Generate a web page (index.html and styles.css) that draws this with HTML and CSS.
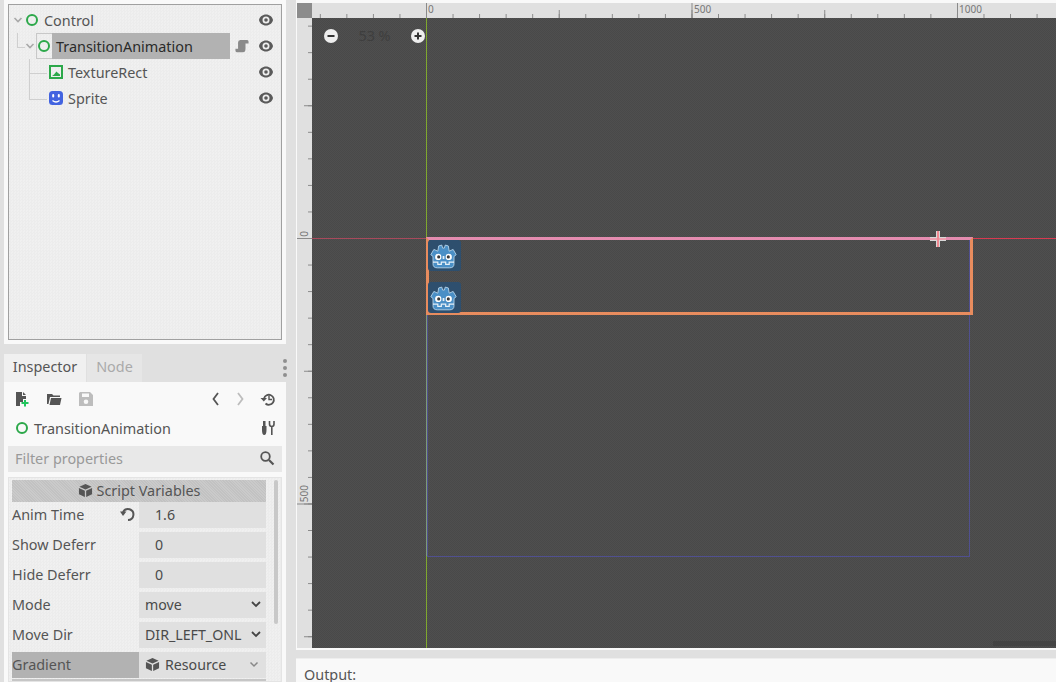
FILE: index.html
```html
<!DOCTYPE html>
<html lang="en">
<head>
<meta charset="UTF-8" />
<title>Godot editor</title>
<link rel="stylesheet" href="styles.css">
</head>
<body>
<svg class="defs" xmlns="http://www.w3.org/2000/svg">
  <symbol id="eye" viewBox="0 0 16 16">
    <path fill="#5a5a5a" fill-rule="evenodd" d="M8 2.500C4.500 2.500 1.700 4.800 1 8c.7 3.200 3.500 5.500 7 5.500s6.300-2.300 7-5.500c-.7-3.200-3.500-5.500-7-5.500zm0 2a3.500 3.500 0 1 1 0 7 3.500 3.500 0 0 1 0-7z"/>
    <circle fill="#5a5a5a" cx="8" cy="8" r="1.800"/>
  </symbol>
  <symbol id="box" viewBox="0 0 16 16">
    <path fill="#555" d="M8 1 14.500 4 8 7 1.500 4z"/>
    <path fill="#555" d="M1 5.300 7.300 8.200V15L1 12z"/>
    <path fill="#555" d="M15 5.300 8.700 8.200V15L15 12z"/>
  </symbol>
  <symbol id="godot" viewBox="0 0 32 32">
    <path fill="#4a8fc6" stroke="#b8d6ec" stroke-width="1" d="M1.500 14.500 5 8.500 9.500 10.500 10.500 4.500 14 3.500 15 7H17L18 3.500 21.500 4.500 22.500 10.500 27 8.500 30.500 14.500 28 16.500V25Q28 29.500 23 29.500H9Q4 29.500 4 25V16.500z"/>
    <path fill="none" stroke="#e6f0f7" stroke-width="1.400" d="M4 23H9.500V25.500H13.500V23H18.500V25.500H22.500V23H28"/>
    <circle fill="#fff" cx="10" cy="17" r="3.600"/>
    <circle fill="#fff" cx="22" cy="17" r="3.600"/>
    <circle fill="#3a3a3a" cx="10.500" cy="17" r="1.800"/>
    <circle fill="#3a3a3a" cx="21.500" cy="17" r="1.800"/>
    <rect fill="#e6f0f7" x="15" y="16" width="2" height="3.500"/>
  </symbol>
</svg>

<div class="app">
  <div class="left">
    <div class="scene-panel">
      <div class="tree">
        <span class="tree-line line-a"></span>
        <span class="tree-line line-b"></span>
        <span class="tree-line line-c"></span>
        <span class="tree-line line-d"></span>
        <span class="tree-line line-e"></span>

        <div class="row depth-0">
          <svg class="chevron" viewBox="0 0 10 10"><path d="M1.500 3 5 6.500 8.500 3" fill="none" stroke="#a8a8a8" stroke-width="1.600"/></svg>
          <span class="ring"></span>
          <span class="row-label">Control</span>
          <svg class="eye"><use href="#eye"/></svg>
        </div>
        <div class="row depth-1">
          <svg class="chevron" viewBox="0 0 10 10"><path d="M1.500 3 5 6.500 8.500 3" fill="none" stroke="#a8a8a8" stroke-width="1.600"/></svg>
          <span class="cursor-cell"><span class="ring"></span></span>
          <span class="row-label selected">TransitionAnimation</span>
          <svg class="script-icon" viewBox="0 0 16 16"><path fill="#8a8a8a" d="M6 1H14Q15.500 1 15.500 3.500V5H12V11Q12 15 9 15H2Q.5 15 .5 13V11H3.500V4Q3.500 1 6 1z"/></svg>
          <svg class="eye"><use href="#eye"/></svg>
        </div>
        <div class="row depth-2">
          <svg class="node-icon" viewBox="0 0 14 14"><rect x="1" y="1" width="12" height="12" fill="none" stroke="#2ca84a" stroke-width="2"/><path fill="#2ca84a" d="M3 11 5 9.500 7.500 6.500 9 8 11 9.500V11z"/></svg>
          <span class="row-label">TextureRect</span>
          <svg class="eye"><use href="#eye"/></svg>
        </div>
        <div class="row depth-2">
          <svg class="node-icon" viewBox="0 0 14 14"><rect width="14" height="14" rx="3.500" fill="#4263e0"/><rect x="3.200" y="3" width="2" height="3.500" rx="1" fill="#fff"/><rect x="8.800" y="3" width="2" height="3.500" rx="1" fill="#fff"/><path d="M3.500 9.500Q7 12.500 10.500 9.500" fill="none" stroke="#fff" stroke-width="1.300"/></svg>
          <span class="row-label">Sprite</span>
          <svg class="eye"><use href="#eye"/></svg>
        </div>
      </div>
    </div>

    <div class="tabs">
      <span class="tab active">Inspector</span>
      <span class="tab">Node</span>
      <span class="dots"><i></i><i></i><i></i></span>
    </div>

    <div class="inspector">
      <div class="toolbar">
        <svg class="tool" viewBox="0 0 16 16"><path fill="#555" d="M2 1H8V5H12V8H9V11H6V15H2z"/><path fill="#555" d="M9 1 12 4H9z"/><path fill="#22c55e" d="M10 9H12V11H14.500V13H12V15.500H10V13H7.500V11H10z"/></svg>
        <svg class="tool gap-a" viewBox="0 0 16 16"><path fill="#555" d="M1 3H6L7.500 4.500H14V6H4L2.500 13H1z"/><path fill="#555" d="M5 7H15.500L14 14H3.500z"/></svg>
        <svg class="tool gap-a" viewBox="0 0 16 16"><path fill="#bdbdbd" fill-rule="evenodd" d="M2 1H12L15 4V15H1V2zM4 2.500V6H11V2.500zM8 8.500A2.300 2.300 0 1 0 8 13.100 2.300 2.300 0 0 0 8 8.500z"/></svg>
        <span class="spacer"></span>
        <svg class="tool" viewBox="0 0 16 16"><path fill="none" stroke="#555" stroke-width="1.800" d="M10 2 5.500 8 10 14"/></svg>
        <svg class="tool gap-b" viewBox="0 0 16 16"><path fill="none" stroke="#bdbdbd" stroke-width="1.800" d="M6 2 10.500 8 6 14"/></svg>
        <svg class="tool gap-c" viewBox="0 0 16 16"><path fill="none" stroke="#555" stroke-width="1.800" d="M4 7.500A5 5 0 1 1 5.500 12.500"/><path fill="#555" d="M.5 7H7L3.800 10.500z"/><path fill="none" stroke="#555" stroke-width="1.400" d="M9 5V8.500H12"/></svg>
      </div>
      <div class="object-row">
        <span class="ring"></span>
        <span class="object-name">TransitionAnimation</span>
        <svg class="tool" viewBox="0 0 16 16"><path fill="#555" d="M3 1H5.500V6H6.500V10Q6.500 15 4.200 15 2 15 2 10V6H3z"/><path fill="none" stroke="#555" stroke-width="1.600" d="M9.500 1V4Q9.500 6.500 11.800 6.500 14 6.500 14 4V1M11.800 6.500V15"/></svg>
      </div>
      <div class="filter">
        <span>Filter properties</span>
        <svg class="tool" viewBox="0 0 16 16"><circle cx="6.500" cy="6.500" r="4.300" fill="none" stroke="#555" stroke-width="1.800"/><path d="M10 10 14.500 14.500" stroke="#555" stroke-width="2.200"/></svg>
      </div>
      <div class="props">
        <span class="scrollbar"></span>
        <div class="section"><svg class="box"><use href="#box"/></svg>Script Variables</div>
        <div class="prop">
          <span class="prop-label">Anim Time<svg class="revert" viewBox="0 0 16 16"><path fill="none" stroke="#555" stroke-width="2" d="M3 6A5.500 5.500 0 1 1 8 14"/><path fill="#555" d="M0 5.500H6.500L3 10z"/></svg></span>
          <span class="prop-value num">1.6</span>
        </div>
        <div class="prop">
          <span class="prop-label">Show Deferr</span>
          <span class="prop-value num">0</span>
        </div>
        <div class="prop">
          <span class="prop-label">Hide Deferr</span>
          <span class="prop-value num">0</span>
        </div>
        <div class="prop">
          <span class="prop-label">Mode</span>
          <span class="prop-value">move<svg class="drop" viewBox="0 0 10 10"><path d="M1 3 5 7 9 3" fill="none" stroke="#444" stroke-width="1.800"/></svg></span>
        </div>
        <div class="prop">
          <span class="prop-label">Move Dir</span>
          <span class="prop-value">DIR_LEFT_ONL<svg class="drop" viewBox="0 0 10 10"><path d="M1 3 5 7 9 3" fill="none" stroke="#444" stroke-width="1.800"/></svg></span>
        </div>
        <div class="prop">
          <span class="prop-label picked">Gradient</span>
          <span class="prop-value"><svg class="box"><use href="#box"/></svg>Resource<svg class="drop faint" viewBox="0 0 10 10"><path d="M1.500 3.500 5 7 8.500 3.500" fill="none" stroke="#888" stroke-width="1.500"/></svg></span>
        </div>
        <div class="section-stub"></div>
      </div>
    </div>
  </div>

  <div class="right">
    <div class="editor">
      <div class="corner"></div>
      <div class="ruler-top">
        <span class="mark mark-0">0</span>
        <span class="mark mark-500">500</span>
        <span class="mark mark-1000">1000</span>
      </div>
      <div class="ruler-left">
        <span class="vmark vmark-0">0</span>
        <span class="vmark vmark-500">500</span>
      </div>
      <div class="canvas">
        <div class="zoom-bar">
          <span class="zoom-btn"><svg viewBox="0 0 10 10"><path d="M1.500 5H8.500" stroke="#333" stroke-width="2"/></svg></span>
          <span class="zoom-value">53 %</span>
          <span class="zoom-btn"><svg viewBox="0 0 10 10"><path d="M1.500 5H8.500M5 1.500V8.500" stroke="#333" stroke-width="2"/></svg></span>
        </div>
        <span class="guide-v"></span>
        <span class="guide-h"></span>
        <span class="frame-blue"></span>
        <div class="frame-orange">
          <span class="tile"><svg><use href="#godot"/></svg></span>
          <span class="tile"><svg><use href="#godot"/></svg></span>
        </div>
        <span class="handle"></span>
        <span class="canvas-scroll"></span>
      </div>
    </div>
    <div class="output">Output:</div>
  </div>
</div>
</body>
</html>
```

FILE: styles.css
```css
* {
  box-sizing: border-box;
}
html, body {
  margin: 0;
  height: 100%;
  overflow: hidden;
}
body {
  background: #e0e0e0;
  color: #555;
  font-family: "Noto Sans", sans-serif;
  font-size: 14.4px;
}
.defs {
  display: none;
}
.app {
  display: flex;
  height: 682px;
}

/* left dock */
.left {
  width: 287px;
  padding-left: 4px;
  flex: none;
  display: flex;
  flex-direction: column;
}
.scene-panel {
  width: 282px;
  height: 344px;
  flex: none;
  padding: 4px;
  background: #f9f9f9;
}
.tree {
  position: relative;
  height: 336px;
  padding-top: 2px;
  border: 1px solid #a0a0a0;
  background: #eeeeee;
  background-image: repeating-conic-gradient(#ececec 0 25%, #f0f0f0 0 50%);
  background-size: 3px 3px;
}
.row {
  display: flex;
  align-items: center;
  height: 26px;
  padding-right: 7px;
}
.depth-0 {
  padding-left: 4px;
}
.depth-1 {
  padding-left: 16px;
}
.depth-2 {
  padding-left: 40px;
}
.chevron {
  width: 10px;
  height: 10px;
  margin-right: 3px;
}
.depth-1 .chevron {
  margin-right: 1px;
}
.ring {
  width: 12px;
  height: 12px;
  flex: none;
  border: 2px solid #2ca84a;
  border-radius: 50%;
}
.row-label {
  flex: 1;
  margin-left: 6px;
}
.cursor-cell {
  display: flex;
  align-items: center;
  justify-content: center;
  width: 16px;
  height: 26px;
  flex: none;
  padding-right: 1px;
  border: 1px solid #c8c8c8;
  border-right: none;
}
.row-label.selected {
  flex: none;
  width: 178px;
  height: 26px;
  margin-left: 0;
  padding-left: 4px;
  line-height: 28px;
  background: #b2b2b2;
  color: #2a2a2a;
}
.node-icon {
  width: 14px;
  height: 14px;
  flex: none;
}
.depth-2 .row-label {
  margin-left: 5px;
}
.eye {
  width: 16px;
  height: 16px;
  flex: none;
  margin-left: auto;
}
.script-icon {
  width: 14px;
  height: 14px;
  flex: none;
  margin-left: 5px;
}
.tree-line {
  position: absolute;
  background: #cfcfcf;
}
.line-a {
  left: 8px;
  top: 28px;
  width: 1px;
  height: 14px;
}
.line-b {
  left: 8px;
  top: 42px;
  width: 8px;
  height: 1px;
}
.line-c {
  left: 20px;
  top: 54px;
  width: 1px;
  height: 40px;
}
.line-d {
  left: 20px;
  top: 68px;
  width: 18px;
  height: 1px;
}
.line-e {
  left: 20px;
  top: 94px;
  width: 18px;
  height: 1px;
}

.tabs {
  display: flex;
  align-items: stretch;
  height: 28px;
  flex: none;
  margin-top: 10px;
  position: relative;
}
.tab {
  width: 55px;
  line-height: 26px;
  text-align: center;
  color: #aaa;
  background: #e6e6e6;
}
.tab.active {
  width: 82px;
  margin-right: 1px;
  color: #555;
  background: #f0f0f0;
}
.dots {
  margin-left: auto;
  width: 4px;
  padding-top: 5px;
  display: flex;
  flex-direction: column;
  gap: 3px;
}
.dots i {
  width: 4px;
  height: 4px;
  border-radius: 50%;
  background: #8f8f8f;
}
.inspector {
  width: 282px;
  flex: 1;
  min-height: 0;
  padding: 0 4px;
  background: #f9f9f9;
}
.toolbar {
  display: flex;
  align-items: center;
  height: 34px;
  padding: 0 6px;
}
.tool {
  width: 16px;
  height: 16px;
  flex: none;
}
.gap-a {
  margin-left: 16px;
}
.gap-b {
  margin-left: 8px;
}
.gap-c {
  margin-left: 12px;
}
.spacer {
  flex: 1;
}
.object-row {
  display: flex;
  align-items: center;
  height: 26px;
  padding: 0 6px 2px 8px;
}
.object-name {
  flex: 1;
  margin-left: 6px;
}
.filter {
  display: flex;
  align-items: center;
  justify-content: space-between;
  height: 26px;
  margin-top: 4px;
  padding: 0 7px 2px;
  color: #999;
  background: #e8e8e8;
}
.props {
  position: relative;
  height: 205px;
  margin-top: 5px;
  padding: 2px 15px 0 3px;
  border: 1px solid #e4e4e4;
  background: #eeeeee;
  background-image: repeating-conic-gradient(#ececec 0 25%, #f0f0f0 0 50%);
  background-size: 3px 3px;
  overflow: hidden;
}
.scrollbar {
  position: absolute;
  right: 3px;
  top: 2px;
  width: 4px;
  height: 144px;
  border-radius: 2px;
  background: #c8c8c8;
}
.section {
  display: flex;
  align-items: center;
  justify-content: center;
  height: 22px;
  padding-bottom: 1px;
  background: #c6c6c6;
  background-image: repeating-linear-gradient(45deg, #c2c2c2 0 1px, #cacaca 1px 2px);
}
.box {
  width: 15px;
  height: 15px;
  flex: none;
  margin-right: 4px;
}
.prop {
  display: flex;
  height: 26px;
  margin-bottom: 4px;
}
.prop-label {
  display: flex;
  align-items: center;
  justify-content: space-between;
  flex: 0 0 127px;
  padding: 0 3px 2px 0;
}
.prop-label.picked {
  background: #b2b2b2;
}
.revert {
  width: 16px;
  height: 16px;
}
.prop-value {
  display: flex;
  align-items: center;
  flex: 0 0 127px;
  padding: 0 0 2px 6px;
  background: #e0e0e0;
  color: #4a4a4a;
  font-size: 14.2px;
}
.prop-value.num {
  padding-left: 16px;
}
.prop-value .box {
  margin-right: 5px;
}
.drop {
  width: 10px;
  height: 10px;
  margin-left: auto;
  margin-right: 5px;
  flex: none;
}
.drop.faint {
  margin-right: 7px;
}
.section-stub {
  height: 10px;
  margin-top: -3px;
  background: #c6c6c6;
}

/* 2d editor */
.right {
  flex: 1;
  min-width: 0;
  margin-left: 9px;
  display: flex;
  flex-direction: column;
}
.editor {
  display: grid;
  grid-template-columns: 15px 1fr;
  grid-template-rows: 15px 1fr;
  height: 650px;
  flex: none;
  padding: 3px 0 2px 1px;
  background: #f9f9f9;
}
.corner {
  background: #8c8c8c;
}
.ruler-top {
  position: relative;
  background-color: #e0e0e0;
  background-image:
    linear-gradient(90deg, #8a8a8a 1px, transparent 1px),
    linear-gradient(90deg, #8a8a8a 1px, transparent 1px),
    linear-gradient(90deg, #8a8a8a 1px, transparent 1px);
  background-repeat: repeat-x;
  background-size: 265.500px 15px, 132.750px 8px, 26.550px 4px;
  background-position: 114px 0, 114px 100%, 114px 100%;
}
.mark {
  position: absolute;
  top: 0;
  font-size: 10px;
  line-height: 13px;
  color: #777;
}
.mark-0 {
  left: 116px;
}
.mark-500 {
  left: 382px;
}
.mark-1000 {
  left: 647px;
}
.ruler-left {
  position: relative;
  background-color: #e0e0e0;
  background-image:
    linear-gradient(#8a8a8a 1px, transparent 1px),
    linear-gradient(#8a8a8a 1px, transparent 1px),
    linear-gradient(#8a8a8a 1px, transparent 1px);
  background-repeat: repeat-y;
  background-size: 15px 265.500px, 8px 132.750px, 4px 26.550px;
  background-position: 0 220px, 100% 220px, 100% 220px;
}
.vmark {
  position: absolute;
  left: 1px;
  font-size: 10px;
  line-height: 12px;
  color: #777;
  writing-mode: vertical-rl;
  transform: rotate(180deg);
}
.vmark-0 {
  top: 213px;
}
.vmark-500 {
  top: 467px;
}
.canvas {
  position: relative;
  overflow: hidden;
  background: #4c4c4c;
  background-image: repeating-conic-gradient(#4f4f4f 0 25%, #494949 0 50%);
  background-size: 2px 2px;
}
.zoom-bar {
  position: absolute;
  left: 12px;
  top: 8px;
  display: flex;
  align-items: center;
  width: 101px;
  justify-content: space-between;
}
.zoom-btn {
  display: flex;
  align-items: center;
  justify-content: center;
  width: 14px;
  height: 14px;
  border-radius: 50%;
  background: #eeeeee;
}
.zoom-btn svg {
  width: 10px;
  height: 10px;
}
.zoom-value {
  color: #3e3e3e;
}
.guide-v {
  position: absolute;
  left: 114px;
  top: 0;
  bottom: 0;
  width: 1px;
  background: linear-gradient(#7fa82e 0 220px, #7d9a78 220px 538px, #7fa82e 538px);
}
.guide-h {
  position: absolute;
  left: 0;
  right: 0;
  top: 220px;
  height: 1px;
  background: linear-gradient(90deg, #a84a5c 0 114px, #e8889c 114px 661px, #d83a50 661px);
}
.frame-blue {
  position: absolute;
  left: 115px;
  top: 220px;
  width: 543px;
  height: 319px;
  border: 1px solid #50508f;
}
.frame-orange {
  position: absolute;
  left: 114px;
  top: 219px;
  width: 547px;
  height: 78px;
  border: 3px solid #e88c5e;
  border-top-color: #e48cb0;
  display: flex;
  flex-direction: column;
  align-items: flex-start;
  gap: 11px;
}
.tile {
  display: block;
  width: 33px;
  height: 31px;
  margin-left: -1px;
  padding: 2px 3px 1px 1px;
  border-radius: 3px;
  background: #2e4f6e;
}
.tile svg {
  display: block;
  width: 29px;
  height: 28px;
}
.handle {
  position: absolute;
  left: 618px;
  top: 213px;
  width: 16px;
  height: 16px;
  background:
    linear-gradient(#f08a92, #f08a92) center / 2px 100% no-repeat,
    linear-gradient(#f0a0b0, #f0a0b0) center / 100% 2px no-repeat,
    linear-gradient(#d8d8d8, #d8d8d8) center / 4px 100% no-repeat,
    linear-gradient(#d8d8d8, #d8d8d8) center / 100% 4px no-repeat;
}
.canvas-scroll {
  position: absolute;
  right: 0;
  bottom: 2px;
  width: 63px;
  height: 5px;
  background: #444444;
}
.output {
  flex: none;
  height: 24px;
  margin-top: 8px;
  padding: 9px 0 0 8px;
  line-height: 14px;
  background: #f9f9f9;
  border-top: 1px solid #eeeeee;
}
```
